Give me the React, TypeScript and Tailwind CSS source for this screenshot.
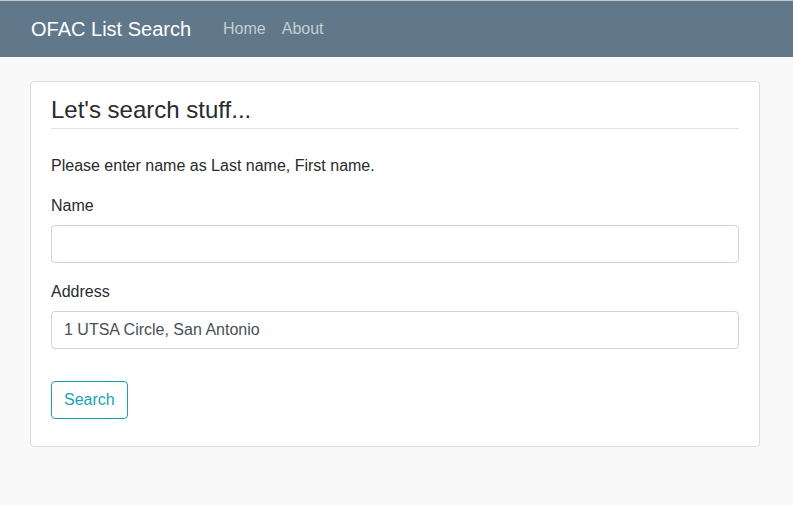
import { useState } from 'react';

export default function App() {
  const [name, setName] = useState('');
  const [address, setAddress] = useState('1 UTSA Circle, San Antonio');

  return (
    <div className="min-h-[505px] bg-[#f9f9f9] font-['Liberation_Sans',Arial,sans-serif] text-[#292b2c]">
      {/* navbar */}
      <nav className="flex h-[57px] items-center border-t border-[#c8c8c8] bg-[#607889] px-[31px]">
        <span className="mr-[24px] text-[20px] leading-[30px] text-white">OFAC List Search</span>
        <div className="flex text-[16px] text-[#c5ced5]">
          <a className="px-2">Home</a>
          <a className="px-2">About</a>
        </div>
      </nav>

      <div className="pl-[30px] pr-[33px] pt-6">
        <div className="rounded-[4px] border border-[#dcdcdc] bg-white px-5 pb-[27px] pt-[13px]">
          <h3 className="border-b border-[#e2e2e2] pb-1 text-[24px] leading-[29px] font-normal">
            Let's search stuff...
          </h3>

          <p className="mt-[25px] mb-4 text-[16px] leading-6">
            Please enter name as Last name, First name.
          </p>

          <div className="mb-[17px]">
            <label className="mb-[7px] block text-[16px] leading-6">Name</label>
            <input
              value={name}
              onChange={(e) => setName(e.target.value)}
              className="block h-[38px] w-full rounded-[4px] border border-[#ced4da] px-3 text-[16px] text-[#495057] outline-none"
            />
          </div>

          <div className="mb-8">
            <label className="mb-[7px] block text-[16px] leading-6">Address</label>
            <input
              value={address}
              onChange={(e) => setAddress(e.target.value)}
              className="block h-[38px] w-full rounded-[4px] border border-[#ced4da] px-3 text-[16px] text-[#495057] outline-none"
            />
          </div>

          <button className="h-[38px] rounded-[4px] border border-[#17a2b8] px-3 text-[16px] text-[#17a2b8]">
            Search
          </button>
        </div>
      </div>
    </div>
  );
}
